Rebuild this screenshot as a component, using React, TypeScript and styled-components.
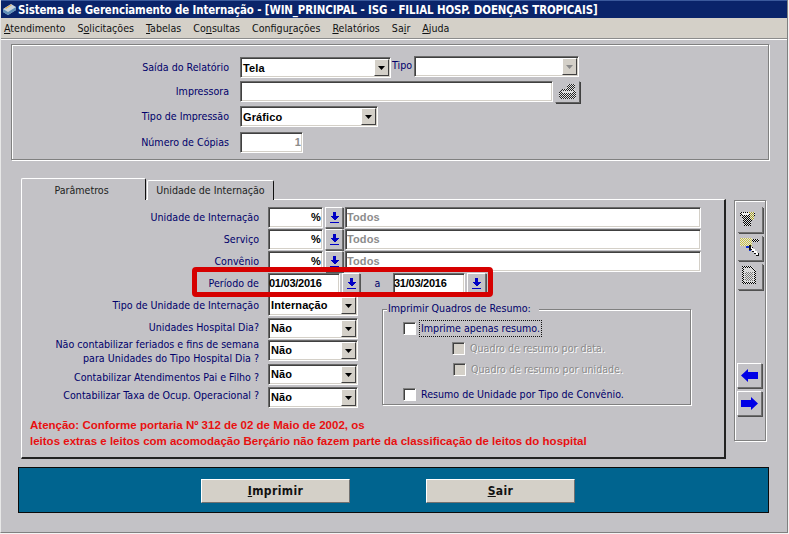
import React from "react";
import styled, { createGlobalStyle } from "styled-components";

const UI = `"DejaVu Sans Condensed", "DejaVu Sans", sans-serif`;
const PANEL = "#c3c2c6";
const FACE = "#d4d0c8";

const Global = createGlobalStyle`
  html, body { margin: 0; padding: 0; background: #f4f4f4; }
  #root { width: 789px; height: 534px; overflow: hidden; }
  * { box-sizing: border-box; }
`;

const Window = styled.div`
  width: 788px; height: 533px; background: ${PANEL};
  border-left: 1px solid #e8e8e8; border-right: 1px solid #808080; border-bottom: 1px solid #808080;
  font: 10.6px/13px ${UI}; font-stretch: condensed; color: #00006a;
  display: flex; flex-direction: column; overflow: hidden;
`;
const TitleBar = styled.div`
  height: 18px; flex: none; background: #0a246a; border-top: 1px solid #3b5a9c; margin-left: -1px; margin-right: -1px;
  display: flex; align-items: center; gap: 1px; padding-left: 2px;
  color: #fff; font: bold 11.4px/16px ${UI}; font-stretch: condensed; white-space: nowrap; letter-spacing: -.1px;
`;
const MenuBar = styled.div`
  height: 21px; flex: none; background: ${FACE}; border-bottom: 1px solid #8c8c8c; box-shadow: 0 1px #fff;
  display: flex; align-items: center; gap: 12px; padding: 0 0 0 4px; color: #111; margin-left: -1px;
`;
const MenuItem = styled.span` white-space: nowrap; `;

const Etched = styled.div`
  border: 1px solid #808080; box-shadow: inset 1px 1px #fff, 1px 1px #fff;
`;
const TopPanel = styled(Etched)`
  width: 758px; height: 116px; margin: 5px 0 0 10px; padding-top: 12px; flex: none;
  display: flex; flex-direction: column;
`;
const Row = styled.div<{ $top?: number }>`
  display: flex; align-items: center; height: 21px; margin-top: ${p => p.$top ?? 0}px; flex: none;
`;
const Label = styled.label<{ $w: number; $gap: number; $dy?: number }>`
  width: ${p => p.$w}px; margin-right: ${p => p.$gap}px; margin-top: ${p => (p.$dy ?? 0) * 2}px;
  padding-bottom: 2px; text-align: right; flex: none; white-space: nowrap; line-height: 14px;
`;
const Sunken = styled.div<{ $w: number; $pad?: number }>`
  width: ${p => p.$w}px; height: 21px; flex: none; background: #fff;
  border: 1px solid; border-color: #6a6a6a #fff #fff #6a6a6a;
  box-shadow: inset 1px 1px #404040, inset -1px -1px ${FACE};
  display: flex; align-items: center; padding: 0 1px 0 ${p => p.$pad ?? 2}px;
  font: bold 11px/13px "Liberation Sans", sans-serif; color: #000;
`;
const Value = styled.span<{ $right?: boolean; $muted?: boolean; $tight?: boolean; $low?: boolean }>`
  flex: 1; text-align: ${p => (p.$right ? "right" : "left")}; white-space: nowrap;
  margin-top: ${p => (p.$low ? 2 : 0)}px;
  letter-spacing: ${p => (p.$tight ? "-.25px" : ".1px")};
  color: ${p => (p.$muted ? "#8c8c8c" : "#000")};
`;
const DropBtn = styled.span<{ $off?: boolean }>`
  width: 15px; height: 17px; flex: none; background: ${FACE};
  border: 1px solid; border-color: #fff #404040 #404040 #fff;
  display: flex; align-items: center; justify-content: center;
  svg { fill: ${p => (p.$off ? "#8a8a8a" : "#000")}; }
`;
const TipoLabel = styled.span` margin: -4px 2px 0 1px; flex: none; `;
const Lift = styled.div` display: flex; margin-top: -2px; `;
const SideBtn = styled.button`
  width: 25px; height: 22px; margin-left: 2px; flex: none; padding: 0; background: ${PANEL};
  border: 1px solid; border-color: ${PANEL} #606060 #606060 ${PANEL}; box-shadow: 1px 1px #404040;
  display: flex; align-items: center; justify-content: center;
`;

const TabRow = styled.div` display: flex; margin: 18px 0 0 20px; flex: none; `;
const TabArea = styled.div` width: 705px; flex: none; display: flex; flex-direction: column; `;
const TabStrip = styled.div` display: flex; align-items: flex-end; height: 22px; position: relative; z-index: 1; gap: 1px; `;
const Tab = styled.div<{ $on?: boolean; $w: number }>`
  width: ${p => p.$w}px; height: ${p => (p.$on ? 22 : 20)}px; flex: none; background: ${PANEL};
  border-top: 1px solid #fff; border-left: 1px solid #fff; border-right: 1px solid #111;
  border-radius: 2px 2px 0 0; text-align: center; padding: ${p => (p.$on ? 5 : 3)}px ${p => (p.$on ? 4 : 0)}px 0 0; color: #222;
`;
const TabPanel = styled.div`
  height: 260px; margin-top: -1px; position: relative;
  border-top: 1px solid #fff; border-left: 1px solid #fff;
  border-right: 2px solid #222; border-bottom: 2px solid #222; padding-top: 6px;
`;
const LookupBtn = styled.button<{ $w?: number }>`
  width: ${p => p.$w ?? 18}px; height: 21px; margin: 0 2px; padding: 0; flex: none; background: ${PANEL};
  border: 1px solid; border-color: #fff #707070 #707070 #fff; box-shadow: 1px 1px #555;
  display: flex; align-items: center; justify-content: center;
`;
const PeriodBox = styled.div`
  position: absolute; left: 170px; top: 67px; width: 301px; height: 30px;
  border: 5px solid #d60000; border-radius: 4px; pointer-events: none;
`;
const Sep = styled.span` width: 31px; flex: none; text-align: center; `;

const Lower = styled.div` display: flex; flex: none; `;
const Col = styled.div` display: flex; flex-direction: column; width: 336px; flex: none; `;

const Group = styled(Etched)`
  position: relative; width: 309px; height: 96px; margin: 15px 0 0 24px; flex: none; padding-top: 11px;
`;
const Legend = styled.span`
  position: absolute; left: 4px; top: -8px; background: ${PANEL}; padding: 0 8px 0 1px; white-space: nowrap;
`;
const CheckLine = styled.div<{ $x: number; $top?: number }>`
  display: flex; align-items: center; height: 15px; margin: ${p => p.$top ?? 0}px 0 0 ${p => p.$x}px; white-space: nowrap;
`;
const Box = styled.span<{ $off?: boolean }>`
  width: 13px; height: 13px; flex: none; margin-right: 4px; background: ${p => (p.$off ? FACE : "#fff")};
  border: 1px solid; border-color: #808080 #fff #fff #808080; box-shadow: inset 1px 1px #404040;
`;
const CheckText = styled.span<{ $focus?: boolean; $off?: boolean }>`
  padding: 0 1px; height: 15px; line-height: 14px;
  outline: ${p => (p.$focus ? "1px dotted #111" : "none")};
  color: ${p => (p.$off ? "#8a8a8a" : "inherit")};
  text-shadow: ${p => (p.$off ? "1px 1px #fff" : "none")};
`;
const Warning = styled.p`
  margin: 9px 0 0 8px; font: bold 11.5px/16px "Liberation Sans", sans-serif; color: #e81010; white-space: nowrap;
`;

const Toolbar = styled(Etched)`
  width: 32px; height: 241px; margin: 22px 0 0 8px; flex: none; padding: 6px 0 0 3px;
  display: flex; flex-direction: column;
`;
const ToolBtn = styled.button<{ $top?: number; $h?: number; $px: number; $py: number }>`
  width: 25px; height: ${p => p.$h ?? 26}px; margin-top: ${p => p.$top ?? 0}px; padding: ${p => p.$py}px 0 0 ${p => p.$px}px; flex: none; background: ${PANEL};
  border: 0; border-right: 1px solid #707070; border-bottom: 1px solid #707070; box-shadow: 1px 1px #505050;
  display: flex; align-items: flex-start; justify-content: flex-start;
`;
const ArrowBtn = styled.button<{ $top: number }>`
  width: 25px; height: 25px; margin: ${p => p.$top}px 0 0 -1px; padding: 0; flex: none; background: ${PANEL};
  border: 1px solid; border-color: #fff #707070 #707070 #fff; box-shadow: 1px 1px #505050;
  display: flex; align-items: center; justify-content: center;
`;

const Footer = styled.div`
  width: 751px; height: 46px; margin: 8px 0 0 17px; flex: none; background: #00648f; border: 1px solid #0a0a0a;
  display: flex; align-items: center; gap: 76px; padding: 1px 0 0 182px;
`;
const BigBtn = styled.button`
  width: 149px; height: 24px; padding: 0; background: ${FACE}; color: #111;
  border: 1px solid; border-color: #fff #707070 #707070 #fff;
  font: bold 12px/14px ${UI}; letter-spacing: .4px;
`;

const Dots = ({ id, color = "#000" }: { id: string; color?: string }) => (
  <pattern id={id} width="2" height="2" patternUnits="userSpaceOnUse">
    <rect width="2" height="2" fill="#e4e4e4" />
    <rect width="1" height="1" fill={color} />
    <rect x="1" y="1" width="1" height="1" fill={color} />
  </pattern>
);

const Arrow = () => (
  <svg width="7" height="4" viewBox="0 0 7 4"><path d="M0 0h7L3.5 4z" /></svg>
);
const Down = () => (
  <svg width="9" height="11" viewBox="0 0 9 11" shapeRendering="crispEdges">
    <path d="M3 0h3v4h3L4.5 8.500 0 4h3z M0 9.500h9v1.500H0z" fill="#0000c4" />
  </svg>
);
const Printer = () => (
  <svg width="18" height="16" viewBox="0 0 18 16" shapeRendering="crispEdges">
    <defs><Dots id="dp" color="#222" /></defs>
    <path d="M9 0h7v5H7z" fill="url(#dp)" />
    <path d="M4 5h11l2 3v5l-2 2H3l-3-2V8z" fill="url(#dp)" />
    <path d="M3 7h11v2H3z" fill="#d8d8d8" />
  </svg>
);
const Basket = () => (
  <svg width="15" height="15" viewBox="0 0 15 15" shapeRendering="crispEdges">
    <defs><Dots id="db" /><Dots id="dy" color="#a8a020" /></defs>
    <path d="M0 1h15v4H0z" fill="url(#db)" />
    <path d="M2 2h7v2H2z" fill="#f0f0f0" />
    <path d="M2 5h10l-1 10H4z" fill="url(#db)" />
    <path d="M9 1h5v8h-3z" fill="url(#dy)" />
  </svg>
);
const Wand = () => (
  <svg width="20" height="21" viewBox="0 0 20 21" shapeRendering="crispEdges">
    <defs><Dots id="dw" /><Dots id="dz" color="#c8c040" /></defs>
    <path d="M0 2h12v8H0z" fill="url(#dz)" />
    <path d="M12 3h7v3h-7z" fill="url(#dw)" />
    <path d="M9 13h2v2H9z M6 10h3v2H6z" fill="#1030d0" />
    <path d="M9 9h2v2h2v2h2v2h2v2h2v3h-3v-2h-2v-2h-2v-2H9z" fill="#111" />
    <path d="M11 11h1v1h1v1h2v2h2v2h1v2h-2v-2h-2v-2h-2v-2h-1z" fill="#fff" />
  </svg>
);
const Page = () => (
  <svg width="14" height="18" viewBox="0 0 14 18" shapeRendering="crispEdges">
    <defs><Dots id="dg" /><Dots id="dh" color="#777" /></defs>
    <path d="M0 0h9l5 5v13H0z" fill="url(#dg)" />
    <path d="M2 2h6l4 4v10H2z" fill="#d8d8d8" />
    <path d="M3 6h8v9H3z" fill="url(#dh)" />
  </svg>
);
const LeftArrow = () => (
  <svg width="17" height="13" viewBox="0 0 17 13"><path d="M0 6.500 7 0v3h10v7H7v3z" fill="#0000e6" /></svg>
);
const RightArrow = () => (
  <svg width="17" height="13" viewBox="0 0 17 13"><path d="M17 6.500 10 0v3H0v7h10v3z" fill="#0000e6" /></svg>
);
const AppIcon = () => (
  <svg width="15" height="15" viewBox="0 0 15 15">
    <path d="M1 7l8-5 5 3v3l-8 5-5-3z" fill="#c8d4dc" />
    <path d="M1 7l5 3 8-5v3l-8 5-5-3z" fill="#5f8fb8" />
    <path d="M3 6l6-3.500 1 .5-6 4z" fill="#e0b060" />
  </svg>
);

const MENU: [string, string, string][] = [
  ["", "A", "tendimento"], ["S", "o", "licitações"], ["", "T", "abelas"], ["Co", "n", "sultas"],
  ["Configu", "r", "ações"], ["", "R", "elatórios"], ["Sa", "i", "r"], ["", "A", "juda"],
];

const Lookup = ({ label }: { label: string }) => (
  <Row $top={1}>
    <Label $w={237} $gap={9}>{label}</Label>
    <Sunken $w={55}><Value $right>%</Value></Sunken>
    <LookupBtn><Down /></LookupBtn>
    <Sunken $w={356} $pad={1}><Value $muted>Todos</Value></Sunken>
  </Row>
);

const Combo = ({ w, v, off, low }: { w: number; v?: string; off?: boolean; low?: boolean }) => (
  <Sunken $w={w}><Value $low={low}>{v}</Value><DropBtn $off={off}><Arrow /></DropBtn></Sunken>
);

export default function App() {
  return (
    <Window>
      <Global />
      <TitleBar><AppIcon />Sistema de Gerenciamento de Internação - [WIN_PRINCIPAL - ISG - FILIAL HOSP. DOENÇAS TROPICAIS]</TitleBar>
      <MenuBar>
        {MENU.map(([a, b, c]) => <MenuItem key={a + b + c}>{a}<u>{b}</u>{c}</MenuItem>)}
      </MenuBar>

      <TopPanel>
        <Row>
          <Label $w={217} $gap={11}>Saída do Relatório</Label>
          <Combo w={151} v="Tela" low />
          <TipoLabel>Tipo</TipoLabel>
          <Lift><Combo w={165} off /></Lift>
        </Row>
        <Row $top={3}>
          <Label $w={217} $gap={11}>Impressora</Label>
          <Sunken $w={313} />
          <SideBtn><Printer /></SideBtn>
        </Row>
        <Row $top={4}>
          <Label $w={217} $gap={11}>Tipo de Impressão</Label>
          <Combo w={138} v="Gráfico" low />
        </Row>
        <Row $top={5}>
          <Label $w={217} $gap={11}>Número de Cópias</Label>
          <Sunken $w={63}><Value $right $muted>1</Value></Sunken>
        </Row>
      </TopPanel>

      <TabRow>
        <TabArea>
          <TabStrip>
            <Tab $on $w={125}>Parâmetros</Tab>
            <Tab $w={127}>Unidade de Internação</Tab>
          </TabStrip>
          <TabPanel>
            <Lookup label="Unidade de Internação" />
            <Lookup label="Serviço" />
            <Lookup label="Convênio" />
            <Row $top={1}>
              <Label $w={237} $gap={9}>Período de</Label>
              <Sunken $w={72} $pad={0}><Value $tight>01/03/2016</Value></Sunken>
              <LookupBtn><Down /></LookupBtn>
              <Sep>a</Sep>
              <Sunken $w={72} $pad={0}><Value $tight>31/03/2016</Value></Sunken>
              <LookupBtn $w={19}><Down /></LookupBtn>
            </Row>
            <PeriodBox />
            <Lower>
              <Col>
                <Row $top={1}><Label $w={237} $gap={9}>Tipo de Unidade de Internação</Label><Combo w={90} v="Internação" /></Row>
                <Row $top={2}><Label $w={237} $gap={9} $dy={-1}>Unidades Hospital Dia?</Label><Combo w={90} v="Não" /></Row>
                <Row $top={1}><Label $w={237} $gap={9} $dy={1}>Não contabilizar feriados e fins de semana<br />para Unidades do Tipo Hospital Dia ?</Label><Combo w={90} v="Não" /></Row>
                <Row $top={3}><Label $w={237} $gap={9} $dy={3}>Contabilizar Atendimentos Pai e Filho ?</Label><Combo w={90} v="Não" /></Row>
                <Row $top={2}><Label $w={237} $gap={9} $dy={-2}>Contabilizar Taxa de Ocup. Operacional ?</Label><Combo w={90} v="Não" /></Row>
              </Col>
              <Group>
                <Legend>Imprimir Quadros de Resumo:</Legend>
                <CheckLine $x={20}><Box /><CheckText $focus>Imprime apenas resumo.</CheckText></CheckLine>
                <CheckLine $x={69} $top={5}><Box $off /><CheckText $off>Quadro de resumo por data.</CheckText></CheckLine>
                <CheckLine $x={70} $top={6}><Box $off /><CheckText $off>Quadro de resumo por unidade.</CheckText></CheckLine>
                <CheckLine $x={20} $top={10}><Box /><CheckText>Resumo de Unidade por Tipo de Convênio.</CheckText></CheckLine>
              </Group>
            </Lower>
            <Warning>
              Atenção: Conforme portaria Nº 312 de 02 de Maio de 2002, os<br />
              leitos extras e leitos com acomodação Berçário não fazem parte da classificação de leitos do hospital
            </Warning>
          </TabPanel>
        </TabArea>
        <Toolbar>
          <ToolBtn $px={2} $py={4}><Basket /></ToolBtn>
          <ToolBtn $top={3} $h={25} $px={2} $py={0}><Wand /></ToolBtn>
          <ToolBtn $top={3} $px={4} $py={2}><Page /></ToolBtn>
          <ArrowBtn $top={73}><LeftArrow /></ArrowBtn>
          <ArrowBtn $top={3}><RightArrow /></ArrowBtn>
        </Toolbar>
      </TabRow>

      <Footer>
        <BigBtn><u>I</u>mprimir</BigBtn>
        <BigBtn><u>S</u>air</BigBtn>
      </Footer>
    </Window>
  );
}
